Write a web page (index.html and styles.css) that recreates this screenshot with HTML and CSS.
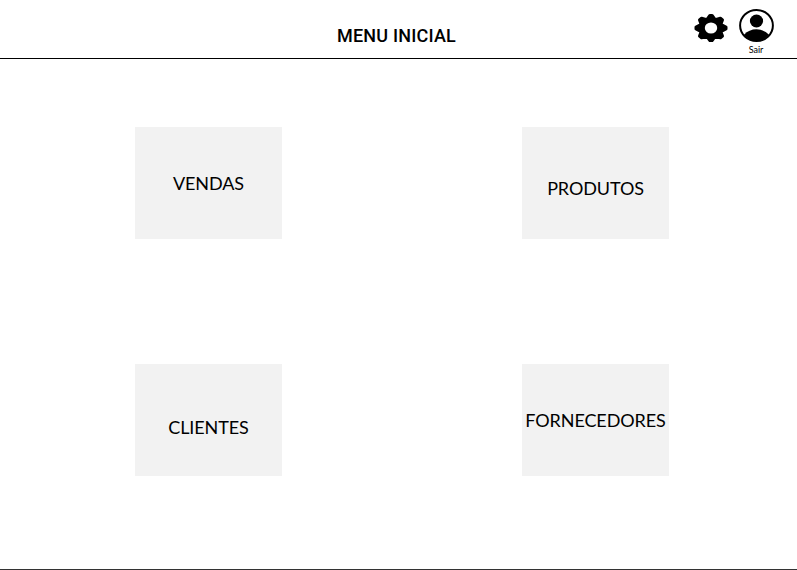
FILE: index.html
```html
<!DOCTYPE html>
<html lang="pt-BR">
<head>
<meta charset="utf-8">
<title>Menu Inicial</title>
<link rel="stylesheet" href="styles.css">
</head>
<body>
<header class="topbar">
  <h1 class="title">MENU INICIAL</h1>
  <div class="actions">
    <svg class="gear" viewBox="-17 -15 34 30"><path d="M-1.100-12.500H1.100L4.200-8.300L9.400-9.800L11.500-8L9.800-3.600L15-1V1L9.800 3.600L11.500 8L9.400 9.800L4.200 8.300L1.100 12.500H-1.100L-4.200 8.300L-9.400 9.800L-11.500 8L-9.800 3.600L-15 1V-1L-9.800-3.600L-11.500-8L-9.400-9.800L-4.200-8.300Z" stroke="#000" stroke-width="3" stroke-linejoin="round"/><ellipse rx="6.200" ry="5.500" fill="#fff"/></svg>
    <div class="account">
      <svg class="user" viewBox="0 0 36 34"><ellipse cx="18.500" cy="17.500" rx="16.400" ry="15.500" fill="none" stroke="#000" stroke-width="2"/><ellipse cx="18.500" cy="13" rx="6.600" ry="6.400"/><path d="M6 26.800Q11 21.300 18.500 21.300T31 26.800Q26 33 18.500 33T6 26.800Z"/></svg>
      <span class="logout">Sair</span>
    </div>
  </div>
</header>
<main class="menu">
  <div class="card sales">VENDAS</div>
  <div class="card products">PRODUTOS</div>
  <div class="card clients">CLIENTES</div>
  <div class="card suppliers">FORNECEDORES</div>
</main>
</body>
</html>
```

FILE: styles.css
```css
* { box-sizing: border-box; }
body { margin: 0; height: 570px; background: #fff; color: #000; font-family: Lato, sans-serif; border-bottom: 1px solid #333; }
.topbar { height: 59px; border-bottom: 1px solid #000; display: grid; grid-template-columns: 337px 1fr auto; padding-right: 23px; }
.title { grid-column: 2; margin: 25px 0 0; font: 500 18px/21px Roboto, sans-serif; letter-spacing: .2px; white-space: nowrap; }
.actions { display: flex; gap: 10px; padding-top: 8px; }
.gear { width: 34px; height: 30px; margin-top: 4.5px; }
.account { width: 36px; display: flex; flex-direction: column; align-items: center; }
.user { width: 36px; height: 34px; flex: none; }
.logout { font-size: 9px; line-height: 11px; margin-top: 2px; }
.menu { display: grid; grid-template-columns: 147px 147px; grid-template-rows: 112px 112px; column-gap: 240px; row-gap: 125px; padding: 68px 0 0 135px; }
.card { background: #f2f2f2; font-size: 18px; line-height: 22px; letter-spacing: -.1px; text-align: center; white-space: nowrap; }
.sales { padding-top: 45px; }
.products { padding-top: 50px; }
.clients { padding-top: 52px; }
.suppliers { padding-top: 45px; }
```
